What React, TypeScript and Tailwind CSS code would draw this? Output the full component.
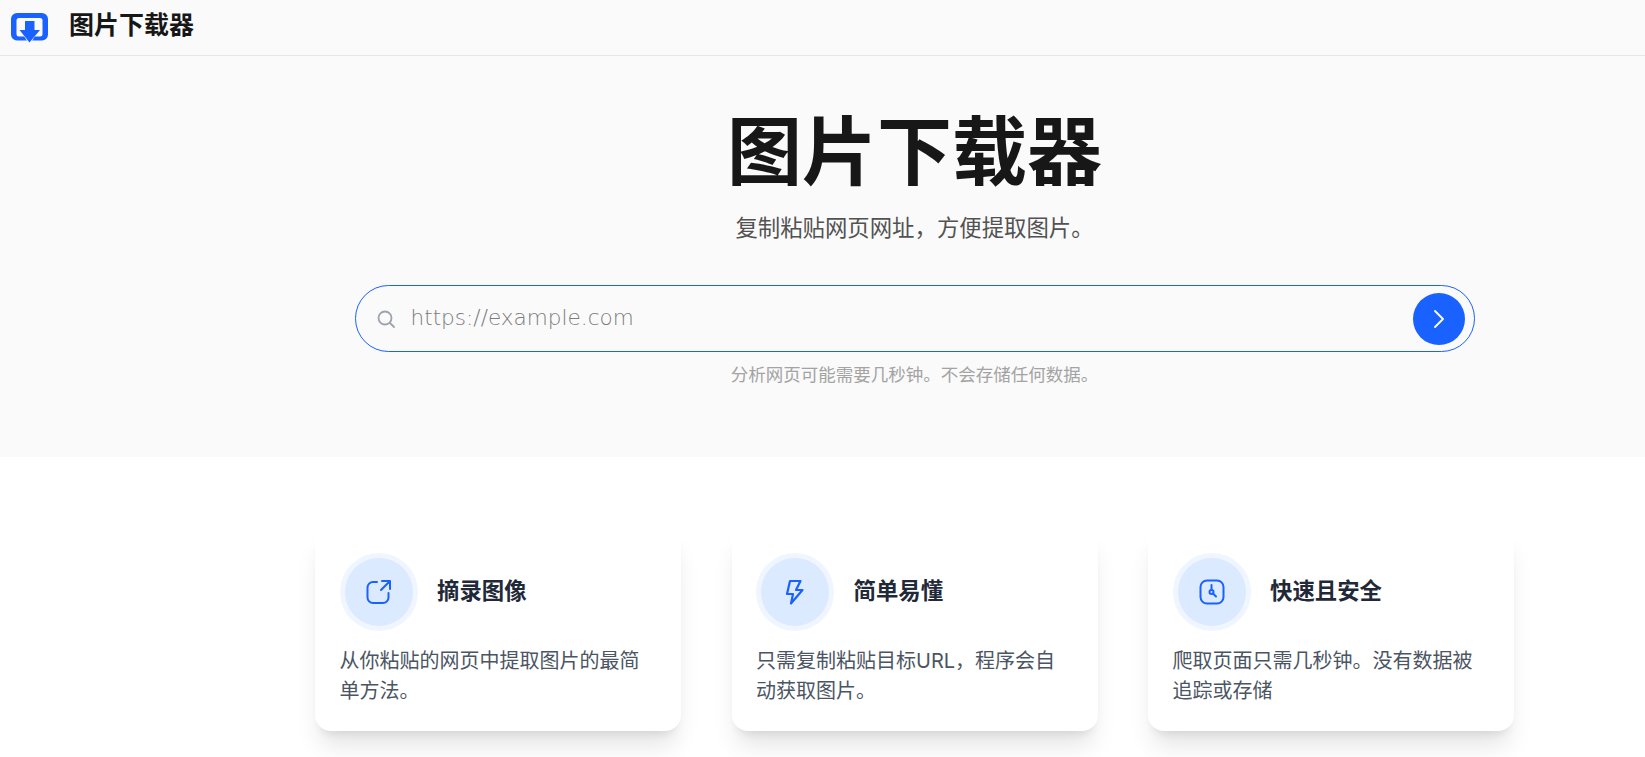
const cjk = "font-['Inter','Noto_Sans_CJK_SC',sans-serif]";

function Logo() {
  return (
    <svg width="37" height="30" viewBox="0 0 37 30" fill="none">
      <path fillRule="evenodd" d="M6 0h25a6 6 0 0 1 6 6v15.500a6 6 0 0 1-6 6H6a6 6 0 0 1-6-6V6a6 6 0 0 1 6-6Zm2 5a2.500 2.500 0 0 0-2.500 2.500V21A2.500 2.500 0 0 0 8 23.500h21a2.500 2.500 0 0 0 2.500-2.500V7.500A2.500 2.500 0 0 0 29 5H8Z" fill="#1a62ff" />
      <path d="M12.500 17.500h2.500V7h7v10.500h2.500v3l-6 9.500-6-9.500v-3Z" fill="#fafafa" stroke="#fafafa" strokeWidth="2" />
      <path d="M14 8h9.500v9H29l-10.500 12.500L8.500 17H14V8Z" fill="#1a62ff" />
    </svg>
  );
}

function ShareIcon() {
  return (
    <svg width="26" height="26" viewBox="0 0 26 26" fill="none" stroke="#1a62ff" strokeWidth="2" strokeLinecap="round" strokeLinejoin="round">
      <path d="M11 3H7a5.500 5.500 0 0 0-5.500 5.500v10A5.500 5.500 0 0 0 7 24h10a5.500 5.500 0 0 0 5.500-5.500V14" />
      <path d="M16 2h8v8M24 2l-9 9" />
    </svg>
  );
}

function BoltIcon() {
  return (
    <svg width="20" height="27" viewBox="0 0 20 27" fill="none" stroke="#1a62ff" strokeWidth="2.200" strokeLinecap="round" strokeLinejoin="round">
      <path d="M5 2h10.500L11 11h6.500L6 24.500 8 15H2L5 2Z" />
    </svg>
  );
}

function ClockIcon() {
  return (
    <svg width="26" height="26" viewBox="0 0 26 26" fill="none" stroke="#1a62ff" strokeWidth="2" strokeLinecap="round" strokeLinejoin="round">
      <rect x="1.500" y="1.500" width="23" height="23" rx="6.500" />
      <circle cx="12.500" cy="13" r="2" />
      <path d="M12.500 6v5M14 14.500l3 3" />
    </svg>
  );
}

const cards = [
  { title: "摘录图像", text: "从你粘贴的网页中提取图片的最简单方法。", icon: <ShareIcon /> },
  { title: "简单易懂", text: "只需复制粘贴目标URL，程序会自动获取图片。", icon: <BoltIcon /> },
  { title: "快速且安全", text: "爬取页面只需几秒钟。没有数据被追踪或存储", icon: <ClockIcon /> },
];

export default function App() {
  return (
    <div className={`h-[757px] overflow-hidden bg-white ${cjk}`}>
      <header className="flex h-[56px] items-center border-b border-[#e5e5e5] bg-[#fafafa] pl-[11px]">
        <Logo />
        <span className="mb-[3px] ml-[21px] text-[25px] font-bold text-[#171717]">图片下载器</span>
      </header>

      <section className="flex h-[401px] flex-col items-center bg-[#fafafa] pl-[184px]">
        <h1 className="mt-[40px] text-[75px] leading-[112px] font-bold text-[#171717]">图片下载器</h1>
        <p className="mt-[3px] text-[22.400px] leading-[34px] text-[#525252]">复制粘贴网页网址，方便提取图片。</p>
        <div className="mt-[40px] flex h-[67px] w-[1120px] items-center rounded-full border border-[#1a62ff] pr-[9px] pl-[21px]">
          <svg width="18" height="18" viewBox="0 0 18 18" fill="none" stroke="#9ca3af" strokeWidth="1.800" strokeLinecap="round">
            <circle cx="8" cy="8" r="6.500" />
            <path d="m13 13 4 4" />
          </svg>
          <span className="ml-[16px] flex-1 font-['DejaVu_Sans',sans-serif] text-[21.600px] font-extralight text-[#7c7c7c]">https://example.com</span>
          <button className="flex h-[52px] w-[52px] items-center justify-center rounded-full bg-[#1a62ff]">
            <svg width="12" height="20" viewBox="0 0 12 20" fill="none" stroke="#fff" strokeWidth="1.800" strokeLinecap="round" strokeLinejoin="round">
              <path d="m2 2 8 8-8 8" />
            </svg>
          </button>
        </div>
        <p className="mt-[10px] text-[17.500px] leading-[26px] text-[#a3a3a3]">分析网页可能需要几秒钟。不会存储任何数据。</p>
      </section>

      <section className="flex justify-center gap-[50.500px] pt-[69px] pl-[184px]">
        {cards.map((c) => (
          <div key={c.title} className="h-[205px] w-[366px] rounded-2xl bg-white pt-[27px] pr-[25px] pl-[24.500px] shadow-xl">
            <div className="flex items-center gap-[19.500px]">
              <div className="flex h-[78px] w-[78px] items-center justify-center rounded-full border-[5px] border-[#eff6ff] bg-[#dbeafe]">
                {c.icon}
              </div>
              <h3 className="mb-[2px] text-[22.400px] font-bold text-[#1f2937]">{c.title}</h3>
            </div>
            <p className="mt-[15px] text-[20px] leading-[30px] text-[#4b5563]">{c.text}</p>
          </div>
        ))}
      </section>
    </div>
  );
}
